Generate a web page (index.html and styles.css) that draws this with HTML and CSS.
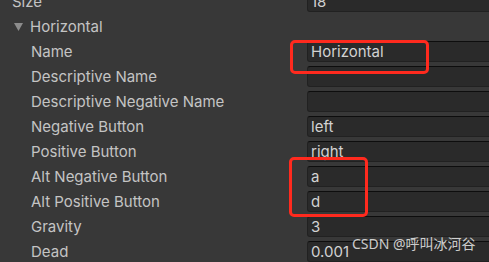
FILE: index.html
```html
<!DOCTYPE html>
<html lang="en">
<head>
    <meta charset="UTF-8">
    <title>Input Axes</title>
    <link rel="stylesheet" href="styles.css">
</head>
<body>
    <div class="inspector">
        <div class="row top-level">
            <span class="label">Size</span>
            <div class="field">18</div>
        </div>
        <div class="row top-level">
            <span class="label foldout">
                <svg class="arrow" width="9" height="8" viewBox="0 0 9 8"><path d="M0 0 H9 L4.5 8 Z" fill="#8c8c8c"/></svg>
                Horizontal
            </span>
        </div>
        <div class="row">
            <span class="label">Name</span>
            <div class="field">Horizontal</div>
        </div>
        <div class="row">
            <span class="label">Descriptive Name</span>
            <div class="field"></div>
        </div>
        <div class="row">
            <span class="label">Descriptive Negative Name</span>
            <div class="field"></div>
        </div>
        <div class="row">
            <span class="label">Negative Button</span>
            <div class="field">left</div>
        </div>
        <div class="row">
            <span class="label">Positive Button</span>
            <div class="field">right</div>
        </div>
        <div class="row">
            <span class="label">Alt Negative Button</span>
            <div class="field">a</div>
        </div>
        <div class="row">
            <span class="label">Alt Positive Button</span>
            <div class="field">d</div>
        </div>
        <div class="row">
            <span class="label">Gravity</span>
            <div class="field">3</div>
        </div>
        <div class="row">
            <span class="label">Dead</span>
            <div class="field">0.001</div>
        </div>

        <!-- highlight boxes drawn on top -->
        <div class="mark mark-name"></div>
        <div class="mark mark-alt"></div>
        <div class="watermark">CSDN @呼叫冰河谷</div>
    </div>
</body>
</html>
```

FILE: styles.css
```css
body {
    margin: 0;
    padding: 0;
    background-color: #383838;
    font-family: 'Inter', 'Noto Sans CJK SC', sans-serif;
    font-size: 15px;
    color: #c4c4c4;
    overflow: hidden;
    height: 262px;
}

.inspector {
    position: relative;
    margin-top: -11px;
}

.row {
    display: flex;
    align-items: center;
    height: 25px;
    padding-left: 31px;
}

.row.top-level {
    padding-left: 12px;
}

.label {
    width: 276px;
    flex-shrink: 0;
    white-space: nowrap;
    line-height: 25px;
}

.top-level .label {
    width: 295px;
}

.foldout {
    display: flex;
    align-items: center;
    gap: 7px;
}

.arrow {
    margin-left: 2px;
    margin-top: 1px;
}

.field {
    box-sizing: border-box;
    height: 21px;
    width: 200px;
    flex-shrink: 0;
    background-color: #2a2a2a;
    border: 1px solid #212121;
    border-top-color: #0d0d0d;
    border-radius: 3px;
    padding: 0 3px;
    line-height: 19px;
    color: #d2d2d2;
}

.mark {
    position: absolute;
    border: 3px solid #ff2a1e;
    border-radius: 5px;
    box-sizing: border-box;
}

.mark-name {
    left: 290px;
    top: 51px;
    width: 139px;
    height: 34px;
}

.mark-alt {
    left: 289px;
    top: 168px;
    width: 79px;
    height: 60px;
}

.watermark {
    position: absolute;
    left: 352px;
    top: 244px;
    font-family: 'Noto Sans', 'Noto Sans CJK SC', sans-serif;
    font-size: 14px;
    color: rgba(235, 235, 235, 0.85);
    white-space: nowrap;
}
```
